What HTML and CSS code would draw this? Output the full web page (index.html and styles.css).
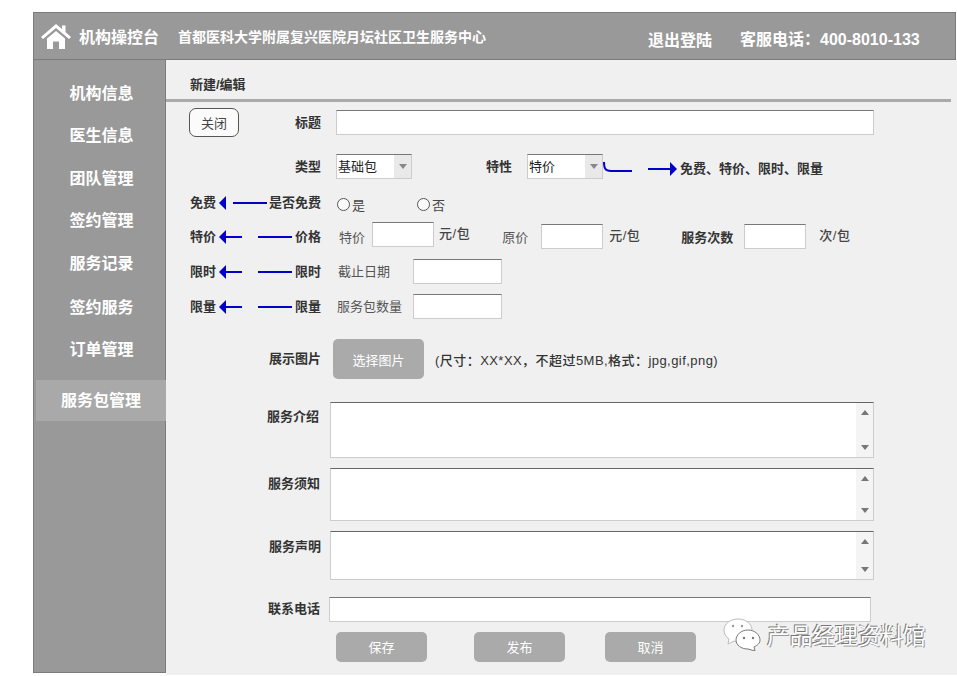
FILE: index.html
```html
<!DOCTYPE html>
<html lang="zh-CN">
<head>
    <meta charset="UTF-8">
    <meta name="viewport" content="width=device-width, initial-scale=1.0">
    <title>机构操控台</title>
    <link rel="stylesheet" href="styles.css">
</head>
<body>
    <div class="frame">
        <header class="topbar">
            <svg class="home" width="30" height="26" viewBox="0 0 30 26">
                <path d="M15 0 L21 5 V1.5 H24.5 V8 L30 13 L28 15 L15 4 L2 15 L0 13 Z" fill="#fff"/>
                <path d="M6 14.5 L15 7 L24 14.5 V25 H18 V17.5 H12 V25 H6 Z" fill="#fff"/>
            </svg>
            <span class="brand">机构操控台</span>
            <span class="org">首都医科大学附属复兴医院月坛社区卫生服务中心</span>
            <a class="logout">退出登陆</a>
            <span class="hotline">客服电话&#xFF1A;400-8010-133</span>
        </header>

        <div class="layout">
            <nav class="sidebar">
                <a class="nav-item">机构信息</a>
                <a class="nav-item">医生信息</a>
                <a class="nav-item">团队管理</a>
                <a class="nav-item">签约管理</a>
                <a class="nav-item">服务记录</a>
                <a class="nav-item nav-low">签约服务</a>
                <a class="nav-item">订单管理</a>
                <a class="nav-item nav-active">服务包管理</a>
            </nav>

            <main class="main">
                <div class="crumb">新建/编辑</div>

                <div class="row row-title">
                    <div class="lead"><button class="close-btn">关闭</button><label class="label">标题</label></div>
                    <input class="input input-title" type="text">
                </div>

                <div class="row row-type">
                    <div class="lead lead-end"><label class="label">类型</label></div>
                    <div class="select select-first"><span class="select-text">基础包</span><span class="select-arrow"></span></div>
                    <label class="label label-trait">特性</label>
                    <div class="select select-trait"><span class="select-text">特价</span><span class="select-arrow"></span></div>
                    <svg class="bracket" width="29" height="12" viewBox="0 0 29 12">
                        <path d="M1 0 C1 6 2 9 8 9 H29" fill="none" stroke="#0000c8" stroke-width="2"/>
                    </svg>
                    <svg class="arrow-right" width="29" height="14" viewBox="0 0 29 14">
                        <path d="M0 7 H22" stroke="#0000c8" stroke-width="2"/>
                        <path d="M22 0 L29 7 L22 14 Z" fill="#0000c8"/>
                    </svg>
                    <span class="label note">免费、特价、限时、限量</span>
                </div>

                <div class="row row-free">
                    <div class="lead lead-raised">
                        <span class="label">免费</span>
                        <svg class="flow" width="52" height="14" viewBox="0 0 52 14">
                            <path d="M9 0 L2 7 L9 14 Z" fill="#0000c8"/>
                            <path d="M16 7 H50" stroke="#0000c8" stroke-width="2"/>
                        </svg>
                        <label class="label">是否免费</label>
                    </div>
                    <label class="radio radio-yes"><input type="radio" name="free"><span>是</span></label>
                    <label class="radio radio-no"><input type="radio" name="free"><span>否</span></label>
                </div>

                <div class="row row-price">
                    <div class="lead lead-lowered">
                        <span class="label">特价</span>
                        <svg class="flow" width="75" height="14" viewBox="0 0 75 14">
                            <path d="M8 0 L1 7 L8 14 Z" fill="#0000c8"/>
                            <path d="M8 7 H24 M40 7 H74" stroke="#0000c8" stroke-width="2"/>
                        </svg>
                        <label class="label">价格</label>
                    </div>
                    <span class="text text-sale">特价</span>
                    <input class="input input-small input-up" type="text">
                    <span class="unit unit-sale">元/包</span>
                    <span class="text text-orig">原价</span>
                    <input class="input input-small input-down" type="text">
                    <span class="unit unit-orig">元/包</span>
                    <span class="label label-times">服务次数</span>
                    <input class="input input-small input-down input-times" type="text">
                    <span class="unit unit-times">次/包</span>
                </div>

                <div class="row row-limit">
                    <div class="lead">
                        <span class="label">限时</span>
                        <svg class="flow" width="75" height="14" viewBox="0 0 75 14">
                            <path d="M8 0 L1 7 L8 14 Z" fill="#0000c8"/>
                            <path d="M8 7 H24 M40 7 H74" stroke="#0000c8" stroke-width="2"/>
                        </svg>
                        <label class="label">限时</label>
                    </div>
                    <span class="text text-date">截止日期</span>
                    <input class="input input-mid" type="text">
                </div>

                <div class="row row-qty">
                    <div class="lead">
                        <span class="label">限量</span>
                        <svg class="flow" width="75" height="14" viewBox="0 0 75 14">
                            <path d="M8 0 L1 7 L8 14 Z" fill="#0000c8"/>
                            <path d="M8 7 H24 M40 7 H74" stroke="#0000c8" stroke-width="2"/>
                        </svg>
                        <label class="label">限量</label>
                    </div>
                    <span class="text text-qty">服务包数量</span>
                    <input class="input input-mid" type="text">
                </div>

                <div class="row row-image">
                    <div class="lead lead-end"><label class="label">展示图片</label></div>
                    <button class="btn btn-pick">选择图片</button>
                    <span class="hint">(尺寸&#xFF1A;XX*XX&#xFF0C;不超过5MB,格式&#xFF1A;jpg,gif,png)</span>
                </div>

                <div class="row row-area row-intro">
                    <div class="lead lead-end lead-top"><label class="label">服务介绍</label></div>
                    <div class="area"><textarea></textarea><div class="scroll"><i class="up"></i><i class="down"></i></div></div>
                </div>

                <div class="row row-area row-notice">
                    <div class="lead lead-end lead-top"><label class="label">服务须知</label></div>
                    <div class="area"><textarea></textarea><div class="scroll"><i class="up"></i><i class="down"></i></div></div>
                </div>

                <div class="row row-area row-state">
                    <div class="lead lead-end lead-top"><label class="label">服务声明</label></div>
                    <div class="area"><textarea></textarea><div class="scroll"><i class="up"></i><i class="down"></i></div></div>
                </div>

                <div class="row row-phone">
                    <div class="lead lead-end lead-raised"><label class="label">联系电话</label></div>
                    <input class="input input-phone" type="text">
                </div>

                <div class="row row-actions">
                    <button class="btn btn-save">保存</button>
                    <button class="btn btn-publish">发布</button>
                    <button class="btn btn-cancel">取消</button>
                </div>

                <div class="watermark">
                    <svg width="38" height="33" viewBox="0 0 38 33">
                        <path d="M15 1 C7 1 1 6 1 12 C1 16 3 19 6 21 L5 26 L11 23 C13 24 15 24 17 24 C24 24 29 18 29 12 C29 6 23 1 15 1 Z" fill="#fff" stroke="#bbb"/>
                        <path d="M25 12 C18 12 13 17 13 22 C13 27 18 31 25 31 L32 33 L31 29 C35 27 37 25 37 22 C37 17 32 12 25 12 Z" fill="#fff" stroke="#777"/>
                        <circle cx="10" cy="8" r="1.2" fill="#999"/>
                        <circle cx="19" cy="8" r="1.2" fill="#999"/>
                        <circle cx="21" cy="20" r="1.2" fill="#777"/>
                        <circle cx="30" cy="20" r="1.2" fill="#777"/>
                    </svg>
                    <span class="watermark-text">产品经理资料馆</span>
                </div>
            </main>
        </div>
    </div>
</body>
</html>
```

FILE: styles.css
```css
* {
    box-sizing: border-box;
}

html, body {
    height: 100%;
}

body {
    margin: 0;
    padding: 12px 0 0 33px;
    background: #fff;
    overflow: hidden;
    font-family: "Liberation Sans", "Noto Sans CJK SC", sans-serif;
    font-size: 13px;
    color: #333;
}

.frame {
    display: flex;
    flex-direction: column;
    height: 664px;
}

/* Top bar */
.topbar {
    display: flex;
    align-items: center;
    height: 48px;
    margin-right: 1px;
    padding-left: 7px;
    background: #999;
    border: 1px solid #7c7c7c;
    color: #fff;
    font-weight: bold;
    white-space: nowrap;
}

.home {
    margin-top: 2px;
}

.brand {
    margin-left: 8px;
    font-size: 16px;
}

.org {
    margin-left: 19px;
    font-size: 14px;
}

.logout {
    margin-left: 162px;
    font-size: 16px;
    margin-top: 6px;
}

.hotline {
    margin-left: 28px;
    font-size: 16px;
    margin-top: 4px;
}

.layout {
    display: flex;
    flex: 1;
}

/* Sidebar */
.sidebar {
    width: 133px;
    height: 613px;
    padding-top: 23px;
    background: #999;
    border: 1px solid #7c7c7c;
    border-top: none;
    color: #fff;
    font-size: 16px;
    font-weight: bold;
}

.nav-item {
    display: block;
    height: 42.4px;
    padding-left: 4px;
    line-height: 22px;
    text-align: center;
}

.nav-low {
    margin-top: 2px;
}

.nav-active {
    width: 131px;
    height: 41px;
    margin-top: -2px;
    margin-left: 2px;
    padding-left: 25px;
    line-height: 42px;
    background: #a9a9a9;
    text-align: left;
}

/* Main column */
.main {
    position: relative;
    flex: 1;
    height: 615px;
    background: #f0f0f0;
}

.crumb {
    height: 42px;
    margin-right: 6px;
    padding: 16px 0 0 24px;
    border-bottom: 3px solid #aaa;
    font-size: 13px;
    font-weight: bold;
    line-height: 18px;
}

.row {
    display: flex;
    align-items: center;
    white-space: nowrap;
}

.row-title { height: 29px; margin-top: 6px; }
.row-type { height: 25px; margin-top: 17px; }
.row-free { height: 22px; margin-top: 14px; }
.row-price { height: 27px; margin-top: 7px; }
.row-limit { height: 25px; margin-top: 10px; }
.row-qty { height: 25px; margin-top: 10px; }
.row-image { height: 40px; margin-top: 20px; }
.row-intro { height: 56px; margin-top: 23px; }
.row-notice { height: 53px; margin-top: 10px; }
.row-state { height: 49px; margin-top: 10px; }
.row-phone { height: 25px; margin-top: 17px; }
.row-actions { height: 30px; margin-top: 10px; padding-left: 170px; }

.lead {
    display: flex;
    align-items: center;
    justify-content: space-between;
    flex: none;
    width: 155px;
    padding-left: 24px;
}

.lead-end {
    justify-content: flex-end;
}

.lead-top {
    align-self: flex-start;
    padding-top: 6px;
}

.lead-raised {
    margin-bottom: 2px;
}

.lead-lowered {
    margin-top: 2px;
}

.row-intro .lead { padding-right: 2px; }
.row-notice .lead { padding-top: 7px; padding-right: 1px; }
.row-state .lead { padding-top: 7px; }
.row-phone .lead { padding-right: 1px; }

.label {
    font-weight: bold;
    color: #333;
    line-height: 18px;
}

.text {
    color: #555;
    line-height: 18px;
}

.unit {
    font-weight: 500;
    color: #444;
    line-height: 18px;
    letter-spacing: 0.5px;
}

/* Controls */
.input {
    height: 25px;
    padding: 0 4px;
    background: #fff;
    border: 1px solid #ccc;
    border-top-color: #777;
    border-radius: 0;
    outline: none;
}

.input-title { width: 538px; margin-left: 15px; }
.input-small { width: 62px; }
.input-mid { width: 89px; }
.input-up { align-self: flex-start; margin-left: 7px; }
.input-down { align-self: flex-end; margin-left: 13px; }
.input-times { margin-left: 11px; }
.input-phone { width: 542px; margin-left: 8px; }

.close-btn {
    width: 50px;
    height: 29px;
    padding: 0;
    margin-left: -1px;
    background: #fbfbfb;
    border: 1px solid #555;
    border-radius: 7px;
    color: #444;
    font: inherit;
}

.select {
    display: flex;
    width: 76px;
    height: 25px;
    background: #fff;
    border: 1px solid #ccc;
    border-top-color: #777;
}

.select-first { margin-left: 15px; }
.select-trait { margin-left: 15px; }

.select-text {
    flex: 1;
    padding-left: 1px;
    line-height: 24px;
    color: #222;
}

.select-arrow {
    display: flex;
    align-items: center;
    justify-content: center;
    width: 17px;
    background: #e9e9e9;
}

.select-arrow::after {
    content: "";
    border: 4px solid transparent;
    border-top: 5px solid #888;
    border-bottom: none;
}

.label-trait { margin-left: 74px; }

.bracket { margin-top: 2px; }
.arrow-right { margin-left: 16px; margin-top: 5px; }
.note { margin-left: 3px; margin-top: 5px; }

.flow { flex: none; }

.radio {
    display: flex;
    align-items: center;
    color: #444;
}

.radio input {
    width: 13px;
    height: 13px;
    margin: 0 2px 0 0;
    appearance: none;
    background: #fafafa;
    border: 1px solid #555;
    border-radius: 50%;
}

.radio-yes { margin-left: 16px; }
.radio-no { margin-left: 52px; }

.text-sale { margin-left: 18px; margin-top: 4px; }
.unit-sale { margin-left: 5px; margin-bottom: 3px; }
.text-orig { margin-left: 32px; margin-top: 4px; }
.unit-orig { margin-left: 6px; margin-top: 1px; }
.label-times { margin-left: 41px; margin-top: 4px; }
.unit-times { margin-left: 13px; margin-top: 1px; }
.text-date { margin-left: 17px; margin-right: 23px; }
.text-qty { margin-left: 16px; margin-right: 11px; }

.btn {
    width: 91px;
    height: 30px;
    padding: 0 0 2px;
    background: #aaa;
    border: none;
    border-radius: 5px;
    color: #fff;
    font: inherit;
}

.btn-pick { height: 40px; margin-left: 12px; padding: 0; }
.btn-publish { margin-left: 47px; }
.btn-cancel { margin-left: 40px; }

.hint {
    margin-left: 11px;
    font-weight: 500;
    color: #333;
    letter-spacing: 0.45px;
}

/* Text areas */
.area {
    display: flex;
    width: 544px;
    height: 100%;
    margin-left: 9px;
    background: #fff;
    border: 1px solid #ccc;
    border-top: 1px solid #666;
}

.area textarea {
    flex: 1;
    border: none;
    outline: none;
    resize: none;
    background: #fff;
}

.scroll {
    display: flex;
    flex-direction: column;
    justify-content: space-between;
    align-items: center;
    width: 17px;
    padding: 7px 0;
    background: #f4f4f4;
}

.scroll i {
    border: 4px solid transparent;
}

.scroll .up {
    border-top: none;
    border-bottom: 5px solid #777;
}

.scroll .down {
    border-bottom: none;
    border-top: 5px solid #777;
}

/* Watermark sits over the form */
.watermark {
    position: absolute;
    left: 557px;
    top: 558px;
    display: flex;
    align-items: center;
    gap: 6px;
}

.watermark-text {
    font-size: 22.7px;
    font-family: "Noto Sans CJK SC", sans-serif;
    color: #fff;
    text-shadow: -1px -1px 0 #777, 1px 1px 0 #999;
    white-space: nowrap;
}
```
